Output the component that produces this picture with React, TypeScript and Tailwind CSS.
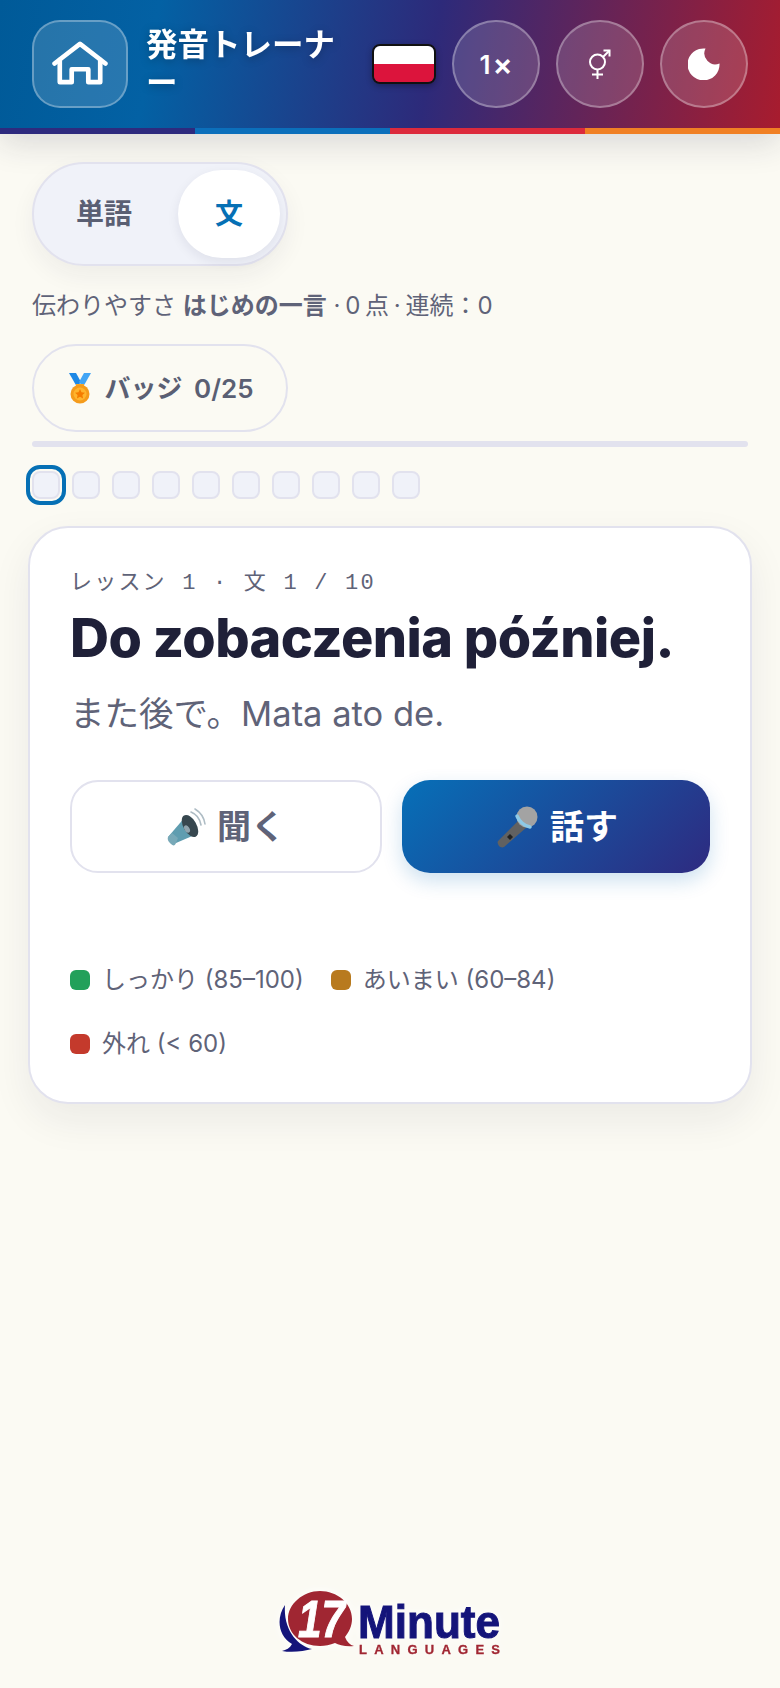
const sans = "font-['Inter','Noto_Sans_CJK_JP',sans-serif]"

function HomeIcon() {
  return (
    <svg width="56" height="44" viewBox="0 0 54 42" fill="none" stroke="white" strokeWidth="4.500" strokeLinecap="round" strokeLinejoin="round" className="-mt-0.5">
      <path d="M2.500 21.500 27 2.500l24.500 19" />
      <path d="M7.500 18v21.500H19V27h16v12.500h11.500V18" />
    </svg>
  )
}

function GenderIcon() {
  return (
    <svg width="22" height="30" viewBox="0 0 22 30" fill="none" stroke="white" strokeWidth="2">
      <circle cx="8.500" cy="13" r="7.500" />
      <path d="M8.500 20.500V30M3 25.500h11" />
      <path d="M14 8 20.500 1.500" />
      <path d="M14.500 1.500h6v6" />
    </svg>
  )
}

function MoonIcon() {
  return (
    <svg width="32" height="32" viewBox="0 0 32 32">
      <path d="M17.500.5A16 16 0 1 0 31.500 15.500 11 11 0 0 1 17.500.5Z" fill="white" />
    </svg>
  )
}

function MedalIcon() {
  return (
    <svg width="24" height="31" viewBox="0 0 24 31" className="ml-0.5">
      <path d="M1 0h7l5 9-4 5Z" fill="#1e88e5" />
      <path d="M23 0h-7l-5 9 4 5Z" fill="#42a5f5" />
      <path d="M8 11h8v6H8Z" fill="#f9a825" />
      <circle cx="12" cy="21" r="9.500" fill="#f59b1b" />
      <circle cx="12" cy="21" r="6.500" fill="#ffb52e" />
      <path d="m12 16 1.500 3.300 3.500.4-2.600 2.300.7 3.500-3.100-1.800-3.100 1.800.7-3.500L7 19.700l3.500-.4Z" fill="#f57c00" />
    </svg>
  )
}

function SpeakerIcon() {
  return (
    <svg width="40" height="40" viewBox="0 0 40 40" fill="none">
      <path d="M24 5c5 2 9 7 10 13M28 2c5 3 9 8 10 15M21 9c4 2 6 5 7 9" stroke="#aebcc4" strokeWidth="1.600" strokeLinecap="round" />
      <path d="M1 30 19 9l11 18-21 9Z" fill="#5f9db0" />
      <path d="M1 30c-1 3 1 5 3 7 2 2 4 2 5-1l2-5-6-5Z" fill="#78a9b8" />
      <ellipse cx="23" cy="19" rx="6.500" ry="12" transform="rotate(-30 23 19)" fill="#37474f" />
      <ellipse cx="20" cy="22" rx="2.500" ry="4" transform="rotate(-30 20 22)" fill="#90a4ae" />
    </svg>
  )
}

function MicIcon() {
  return (
    <svg width="44" height="42" viewBox="0 0 44 42" fill="none">
      <path d="M26 13 33 21 10 41c-2 1-4 0-5-1-1-2-2-3-1-5Z" fill="#616161" />
      <path d="M16 28l3 3-3 3-3-3Z" fill="#212121" />
      <circle cx="33" cy="11" r="10.500" fill="#a3a3a3" />
      <path d="M23 10c2 5 7 10 13 11" stroke="#8ecae6" strokeWidth="3.500" strokeLinecap="round" />
    </svg>
  )
}

function Logo() {
  return (
    <svg width="232" height="70" viewBox="0 0 232 70" className="drop-shadow-[0_0_5px_white]">
      <g transform="translate(4 0)">
        <path d="M7 17C-2 30 0 48 14 56c-2 4-6 6-10 7 11 2 22 0 30-2C20 58 5 42 7 17Z" fill="#14147a" />
        <path transform="translate(2 1)" d="M40 2c17 0 32 12 32 28 0 7-3 13-7 18 2 5 5 8 9 9-8 1-15-1-19-3-5 2-10 3-15 3C22 57 8 45 8 30S23 2 40 2Z" fill="#a02632" />
        <text x="20" y="49" fontFamily="'Liberation Sans',sans-serif" fontWeight="700" fontStyle="italic" fontSize="52" fill="white" stroke="white" strokeWidth="1" textLength="47" lengthAdjust="spacingAndGlyphs">17</text>
        <text x="80" y="50" fontFamily="'Liberation Sans',sans-serif" fontWeight="700" fontSize="46" fill="#14147a" stroke="#14147a" strokeWidth="1" textLength="142" lengthAdjust="spacingAndGlyphs">Minute</text>
        <text x="81" y="66" fontFamily="'Liberation Sans',sans-serif" fontWeight="700" fontSize="13" fill="#a02632" stroke="#a02632" strokeWidth="0.3" textLength="141">LANGUAGES</text>
      </g>
    </svg>
  )
}

function Legend({ color, label }: { color: string; label: string }) {
  return (
    <div className="flex items-center gap-3 h-9">
      <span className={`w-5 h-5 rounded-md ${color}`} />
      <span className="text-[24px] text-[#5f6378]">{label}</span>
    </div>
  )
}

const circleBtn =
  'w-[88px] h-[88px] shrink-0 rounded-full border-2 border-white/30 bg-white/15 flex items-center justify-center text-white'

export default function App() {
  return (
    <div className={`${sans} h-[1688px] overflow-hidden flex flex-col bg-[#fbfaf3]`}>
      {/* Header */}
      <header className="shadow-[0_8px_32px_rgba(30,30,60,0.16)]">
        <div className="h-[128px] flex items-center px-8 gap-4 bg-[linear-gradient(100deg,#005a98_0%,#0361a4_20%,#2d2a7a_55%,#a81c2e_100%)]">
          <button className="w-24 h-[88px] shrink-0 rounded-[28px] border-2 border-white/30 bg-white/15 flex items-center justify-center">
            <HomeIcon />
          </button>
          <h1 className="w-[200px] shrink-0 ml-0.5 text-[31.500px] leading-[38px] font-bold text-white drop-shadow-[0_2px_4px_rgba(0,0,0,0.25)]">
            発音トレーナー
          </h1>
          <div className="w-16 h-10 ml-auto shrink-0 rounded-lg border-2 border-[#111] overflow-hidden flex flex-col shadow-[0_2px_6px_rgba(0,0,0,0.3)]">
            <div className="flex-1 bg-white" />
            <div className="flex-1 bg-[#dc143c]" />
          </div>
          <button className={`${circleBtn} text-[26px] font-semibold`}>
            1<span className="ml-0.5 text-[30px]">×</span>
          </button>
          <button className={circleBtn}>
            <GenderIcon />
          </button>
          <button className={circleBtn}>
            <MoonIcon />
          </button>
        </div>
        <div className="h-1.5 flex">
          <div className="flex-1 bg-[#2e2a7e]" />
          <div className="flex-1 bg-[#0b6fbb]" />
          <div className="flex-1 bg-[#dc2a3c]" />
          <div className="flex-1 bg-[#f08024]" />
        </div>
      </header>

      <main className="px-8 pt-7">
        {/* Mode switch */}
        <div className="w-64 h-[104px] p-1.5 rounded-full border-2 border-[#e2e2ee] bg-[#f0f2f9] flex shadow-[0_10px_24px_rgba(30,30,60,0.06)]">
          <button className="flex-1 pr-2.5 text-[28px] font-bold text-[#5a5f73]">単語</button>
          <button className="w-[102px] rounded-full bg-white text-[28px] font-bold text-[#0670b5] shadow-[0_4px_12px_rgba(30,30,60,0.08)]">
            文
          </button>
        </div>

        <p className="mt-[20px] h-10 leading-10 text-[24px] text-[#5f6378]">
          伝わりやすさ <b className="font-bold">はじめの一言</b>{' '}
          <span className="[word-spacing:-2px]">· 0 点 · 連続：0</span>
        </p>

        <button className="mt-[18px] w-64 h-[88px] rounded-full border-2 border-[#e2e2ee] flex items-center justify-center gap-3 text-[26px] font-semibold text-[#5a5f73] [word-spacing:5px]">
          <MedalIcon />
          バッジ 0/25
        </button>

        <div className="mt-[9px] h-1.5 rounded-full bg-[#e2e2ee]" />

        {/* Sentence dots */}
        <div className="mt-6 flex gap-3">
          {Array.from({ length: 10 }).map((_, i) => (
            <span
              key={i}
              className={`w-7 h-7 rounded-lg border-2 border-[#e2e2ee] bg-[#f0f2f9] ${
                i === 0 ? 'outline-4 outline-offset-2 outline-[#0670b5]' : ''
              }`}
            />
          ))}
        </div>

        {/* Card */}
        <section className="mt-[27px] -mx-1 h-[578px] px-10 rounded-[40px] border-2 border-[#e2e2ee] bg-white shadow-[0_16px_40px_rgba(30,30,60,0.07)]">
          <p className="mt-[40px] h-8 leading-8 text-[22px] tracking-[0.1em] text-[#5f6378] font-['Liberation_Mono','Noto_Sans_CJK_JP',monospace]">
            レッスン 1 · 文 1 / 10
          </p>
          <h2 className="mt-1 text-[54px] leading-[68px] font-extrabold tracking-[-0.01em] text-[#1f2038]">
            Do zobaczenia później.
          </h2>
          <p className="mt-[15px] text-[34.500px] leading-[54px] text-[#5f6378]">また後で。Mata ato de.</p>

          <div className="mt-[39px] flex gap-5">
            <button className="flex-1 h-[93px] rounded-[28px] border-2 border-[#e2e2ee] bg-white flex items-center justify-center gap-2.5 text-[34px] font-bold text-[#5f6378]">
              <SpeakerIcon />
              聞く
            </button>
            <button className="flex-1 h-[93px] rounded-[28px] bg-[linear-gradient(135deg,#0670b8,#2e2a80)] flex items-center justify-center gap-3 text-[34px] font-bold text-white shadow-[0_8px_20px_rgba(4,104,180,0.2)]">
              <MicIcon />
              話す
            </button>
          </div>

          <div className="mt-[89px] flex flex-wrap gap-x-[27px] gap-y-7">
            <Legend color="bg-[#22a05a]" label="しっかり (85–100)" />
            <Legend color="bg-[#b87a1e]" label="あいまい (60–84)" />
            <Legend color="bg-[#c43a2c]" label="外れ (< 60)" />
          </div>
        </section>
      </main>

      <footer className="mt-auto pb-[30px] flex justify-center">
        <Logo />
      </footer>
    </div>
  )
}
